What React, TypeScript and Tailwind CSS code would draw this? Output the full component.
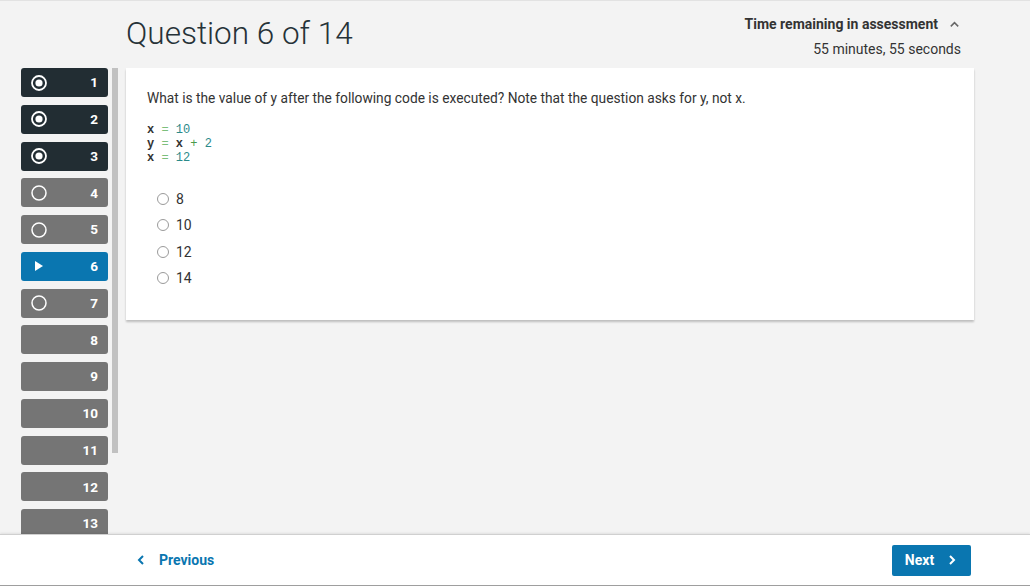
import React from "react";

type Status = "answered" | "unanswered" | "current" | "unseen";

const items: { n: number; s: Status }[] = [
  { n: 1, s: "answered" },
  { n: 2, s: "answered" },
  { n: 3, s: "answered" },
  { n: 4, s: "unanswered" },
  { n: 5, s: "unanswered" },
  { n: 6, s: "current" },
  { n: 7, s: "unanswered" },
  { n: 8, s: "unseen" },
  { n: 9, s: "unseen" },
  { n: 10, s: "unseen" },
  { n: 11, s: "unseen" },
  { n: 12, s: "unseen" },
  { n: 13, s: "unseen" },
];

function NavIcon({ s }: { s: Status }) {
  if (s === "answered")
    return (
      <svg width="18" height="18" viewBox="0 0 18 18">
        <circle cx="9" cy="9" r="7" fill="none" stroke="white" strokeWidth="1.8" />
        <circle cx="9" cy="9" r="3.6" fill="white" />
      </svg>
    );
  if (s === "unanswered")
    return (
      <svg width="18" height="18" viewBox="0 0 18 18">
        <circle cx="9" cy="9" r="7" fill="none" stroke="white" strokeWidth="1.5" />
      </svg>
    );
  if (s === "current")
    return (
      <svg width="18" height="18" viewBox="0 0 18 18">
        <path d="M5 4 L13 9 L5 14 Z" fill="white" />
      </svg>
    );
  return <span className="w-[18px]" />;
}

function NavButton({ n, s }: { n: number; s: Status }) {
  const bg =
    s === "answered" ? "bg-[#222d33]" : s === "current" ? "bg-[#0a76b0]" : "bg-[#757575]";
  return (
    <div
      className={`${bg} h-[29px] w-[87px] shrink-0 rounded-[3px] flex items-center justify-between pl-[19px] pr-[10px] text-white text-[13.5px] font-bold`}
    >
      <div className="-ml-[10px] flex items-center">
        <NavIcon s={s} />
      </div>
      <span>{n}</span>
    </div>
  );
}

function Radio() {
  return <span className="inline-block w-[12px] h-[12px] rounded-full border border-[#9a9a9a] bg-white" />;
}

export default function App() {
  const font = { fontFamily: "Roboto, 'Noto Sans', sans-serif" };
  return (
    <div className="w-[1030px] h-[586px] bg-[#f3f3f3] flex flex-col overflow-hidden" style={font}>
      <div className="flex-1 flex border-t border-[#e2e2e2] overflow-hidden">
        {/* Sidebar */}
        <div className="flex pt-[67px] pl-[21px] gap-[4px] shrink-0">
          <div className="flex flex-col gap-[7.75px]">
            {items.map((it) => (
              <NavButton key={it.n} n={it.n} s={it.s} />
            ))}
          </div>
          <div className="w-[6px] h-[385px] bg-[#c1c1c1] shrink-0" />
        </div>
        {/* Main */}
        <div className="flex-1 flex flex-col pl-[8px] pr-[56px]">
          <div className="h-[67px] flex justify-between">
            <h1 className="text-[31.5px] leading-[32px] font-light text-[#263238] pt-[17px]">
              Question 6 of 14
            </h1>
            <div className="flex flex-col items-end pt-[15px] pr-[13px]">
              <div className="flex items-center gap-[10px]">
                <span className="text-[14px] leading-[17px] font-bold text-[#333]">
                  Time remaining in assessment
                </span>
                <svg width="13" height="13" viewBox="0 0 14 14">
                  <path d="M3 9 L7 5 L11 9" fill="none" stroke="#666" strokeWidth="1.6" />
                </svg>
              </div>
              <div className="text-[14px] leading-[17px] text-[#333] mt-[8px]">55 minutes, 55 seconds</div>
            </div>
          </div>
          <div className="bg-white h-[252px] shadow-[0_2px_2px_rgba(0,0,0,0.22)] pl-[21px] pt-[22px]">
            <p className="text-[13.75px] leading-[17px] text-[#333]">
              What is the value of y after the following code is executed? Note that the question asks for y, not x.
            </p>
            <pre
              className="mt-[16px] text-[12px] leading-[14px] text-[#333]"
              style={{ fontFamily: "'Liberation Mono', 'DejaVu Sans Mono', monospace" }}
            >
              <div>
                <span className="font-bold">x</span> <span className="text-[#7cbf7c]">=</span>{" "}
                <span className="text-[#2b8a8a]">10</span>
              </div>
              <div>
                <span className="font-bold">y</span> <span className="text-[#7cbf7c]">=</span>{" "}
                <span className="font-bold">x</span> <span className="text-[#4a9a4a]">+</span>{" "}
                <span className="text-[#2b8a8a]">2</span>
              </div>
              <div>
                <span className="font-bold">x</span> <span className="text-[#7cbf7c]">=</span>{" "}
                <span className="text-[#2b8a8a]">12</span>
              </div>
            </pre>
            <div className="mt-[26px] pl-[10px] flex flex-col gap-[10.3px]">
              {["8", "10", "12", "14"].map((o) => (
                <div key={o} className="flex items-center gap-[7px] h-[16px]">
                  <Radio />
                  <span className="text-[14px] leading-[16px] text-[#333]">{o}</span>
                </div>
              ))}
            </div>
          </div>
        </div>
      </div>
      {/* Footer */}
      <div className="h-[52px] shrink-0 bg-white border-t border-[#d0d0d0] border-b border-b-[#9e9e9e] flex items-center justify-between pl-[135px] pr-[59px] shadow-[0_-1px_2px_rgba(0,0,0,0.08)]">
        <div className="flex items-center gap-[12px] text-[#0a76b0] text-[14px] font-bold">
          <svg width="12" height="12" viewBox="0 0 12 12">
            <path d="M8 2 L4 6 L8 10" fill="none" stroke="#0a76b0" strokeWidth="2" />
          </svg>
          <span>Previous</span>
        </div>
        <div className="w-[79px] h-[31px] bg-[#0a76b0] rounded-[2px] flex items-center justify-center gap-[12px] text-white text-[14px] font-bold">
          <span>Next</span>
          <svg width="12" height="12" viewBox="0 0 12 12">
            <path d="M4 2 L8 6 L4 10" fill="none" stroke="white" strokeWidth="2" />
          </svg>
        </div>
      </div>
    </div>
  );
}
